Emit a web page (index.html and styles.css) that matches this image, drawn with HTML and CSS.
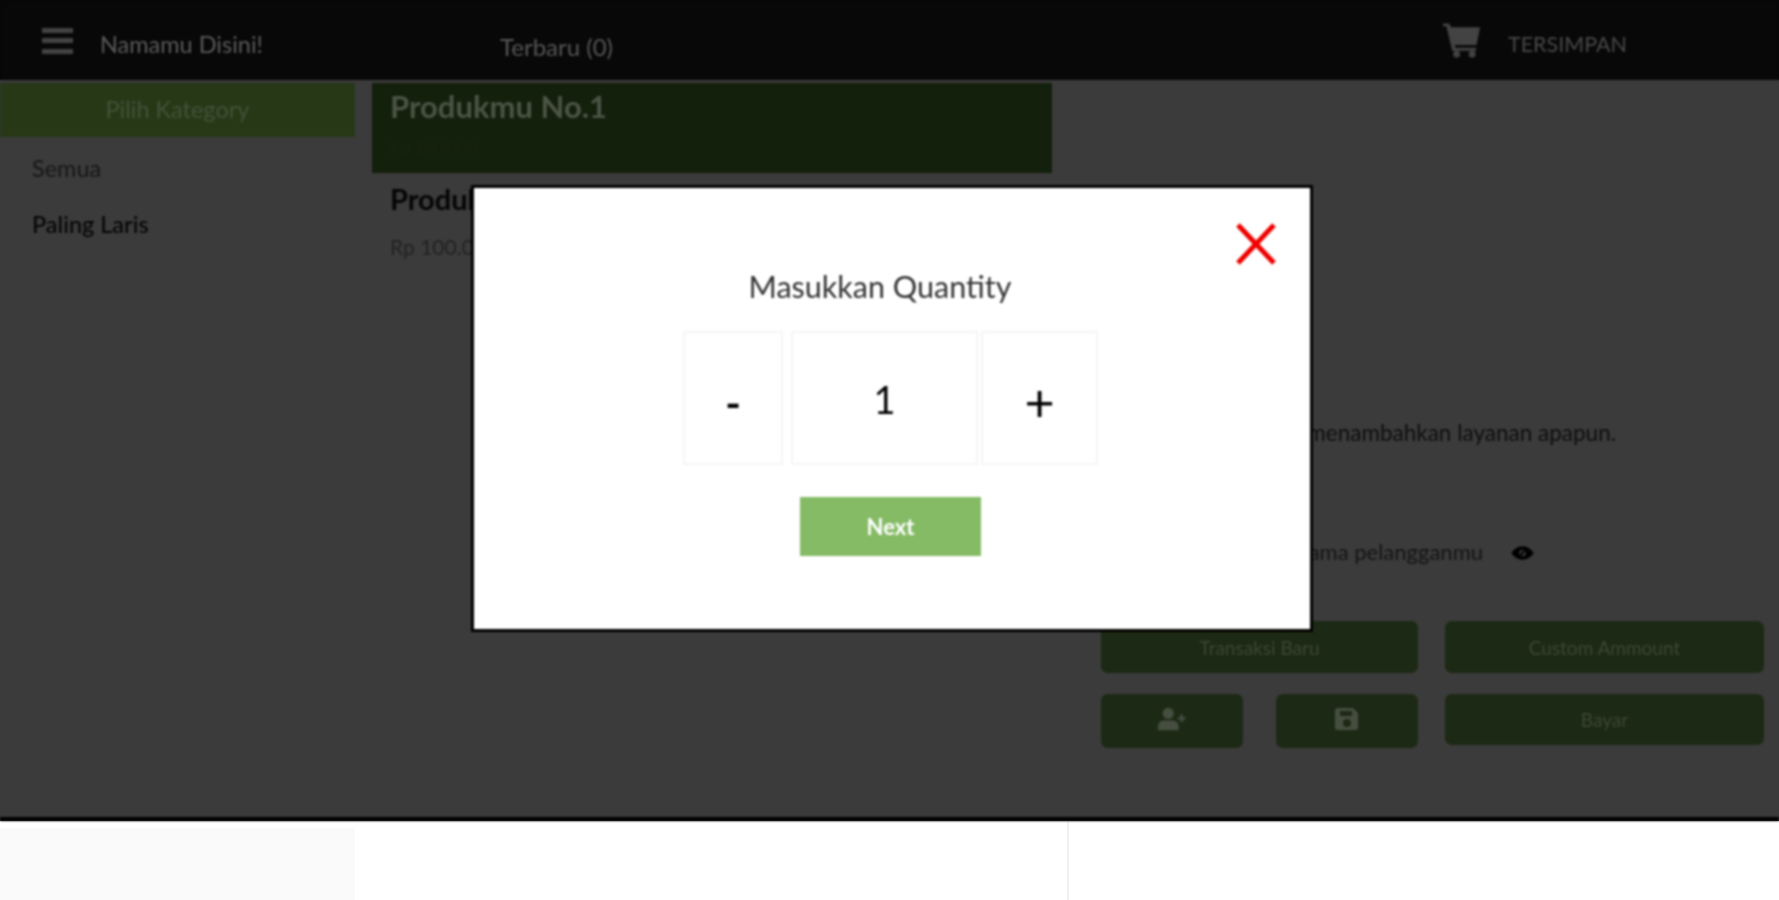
FILE: index.html
```html
<!DOCTYPE html>
<html lang="en">
<head>
    <meta charset="UTF-8">
    <meta name="viewport" content="width=device-width, initial-scale=1.0">
    <title>Kasir</title>
    <link rel="stylesheet" href="styles.css">
</head>
<body>
    <div class="screen">
        <header class="topbar">
            <div class="hamburger"><span></span><span></span><span></span></div>
            <div class="shop-name">Namamu Disini!</div>
            <div class="latest">Terbaru (0)</div>
            <svg class="cart-icon" viewBox="0 0 40 36">
                <path d="M1 1h6.500l1.500 4h30l-3.500 18h-22.500l.8 3h21.200v3h-24.500l-6-25h-3.500z"/>
                <circle cx="15" cy="32.500" r="3.500"/>
                <circle cx="31" cy="32.500" r="3.500"/>
            </svg>
            <div class="saved">TERSIMPAN</div>
        </header>

        <div class="columns">
            <aside class="categories">
                <div class="categories-title">Pilih Kategory</div>
                <div class="category">Semua</div>
                <div class="category category-dark">Paling Laris</div>
            </aside>

            <main class="products">
                <div class="product-card">
                    <h2>Produkmu No.1</h2>
                    <p>Rp 100.000</p>
                </div>
                <div class="product-row">
                    <h3>Produkmu No.2</h3>
                    <p>Rp 100.000</p>
                </div>
            </main>

            <section class="cart">
                <p class="cart-empty">Kamu belum menambahkan layanan apapun.</p>
                <div class="cart-customer">
                    <span>Tampilkan nama pelangganmu</span>
                    <svg class="eye-icon" viewBox="0 0 24 16">
                        <path d="M12 1c5 0 9 3 11.500 7-2.500 4-6.500 7-11.500 7s-9-3-11.500-7c2.500-4 6.500-7 11.500-7z"/>
                        <circle cx="12" cy="8" r="3.500" fill="#3b3b3b"/>
                        <path class="eye-slash" d="M16 3l-8 10"/>
                    </svg>
                </div>
                <div class="cart-actions">
                    <button class="action">Transaksi Baru</button>
                    <button class="action">Custom Ammount</button>
                    <div class="action-icons">
                        <button class="action">
                            <svg class="action-icon" viewBox="0 0 32 24">
                                <circle cx="12" cy="6" r="6"/>
                                <path d="M1 24v-4c0-4 3-6.500 6-6.500h10c3 0 6 2.500 6 6.500v4z"/>
                                <path d="M25 7h2.500v3h3v2.500h-3v3h-2.500v-3h-3v-2.500h3z"/>
                            </svg>
                        </button>
                        <button class="action">
                            <svg class="action-icon" viewBox="0 0 24 24">
                                <path d="M2 1h16l5 5v15a2 2 0 0 1-2 2h-19a2 2 0 0 1-2-2v-18a2 2 0 0 1 2-2zM5 4v5h12v-5zM12 12a4 4 0 1 0 0 8 4 4 0 0 0 0-8z" fill-rule="evenodd"/>
                            </svg>
                        </button>
                    </div>
                    <button class="action action-short">Bayar</button>
                </div>
            </section>
        </div>

        <div class="modal">
            <svg class="modal-close" viewBox="0 0 42 42">
                <path d="M3 2l36 38M39 2l-36 38"/>
            </svg>
            <div class="modal-title">Masukkan Quantity</div>
            <div class="stepper">
                <div class="step step-minus">-</div>
                <div class="step step-value">1</div>
                <div class="step step-plus">+</div>
            </div>
            <button class="next-btn">Next</button>
        </div>
    </div>

    <div class="below">
        <div class="below-left"></div>
        <div class="below-middle"></div>
        <div class="below-right"></div>
    </div>
</body>
</html>
```

FILE: styles.css
```css
:root {
    --dim-bg: #3b3b3b;
    --dim-header: #080808;
    --dim-green: #1c2914;
    --dim-green-strong: #13200c;
    --dim-strip: #273817;
    --bright-green: #85bb65;
}

* {
    margin: 0;
    padding: 0;
    box-sizing: border-box;
}

/* same colours behind the blurred screen, so its edges don't fade to white */
html {
    background: linear-gradient(var(--dim-header) 80px, var(--dim-bg) 80px);
}

body {
    font-family: Lato, "Open Sans", sans-serif;
    overflow: hidden;
}

button {
    font-family: inherit;
    border: none;
}

.screen {
    position: relative;
    height: 821px;
    background: var(--dim-bg);
    border-bottom: 4px solid #000;
    filter: blur(0.8px);
}

.topbar {
    display: flex;
    align-items: center;
    height: 80px;
    padding-left: 42px;
    background: var(--dim-header);
}

.hamburger {
    display: flex;
    flex-direction: column;
    justify-content: space-between;
    width: 31px;
    height: 26px;
    margin-top: 1px;
}

.hamburger span {
    height: 5px;
    background: #434343;
}

.shop-name {
    width: 400px;
    margin: 8px 0 0 27px;
    font-size: 23.500px;
    color: #5a5a5a;
}

.latest {
    width: 942px;
    margin-top: 12px;
    font-size: 24px;
    color: #565656;
}

.cart-icon {
    width: 39px;
    height: 36px;
    margin-top: -1px;
    fill: #434343;
}

.saved {
    margin: 8px 0 0 27px;
    font-size: 21.500px;
    color: #484848;
}

.columns {
    display: flex;
    height: 737px;
    padding-top: 3px;
}

.categories {
    width: 355px;
}

.categories-title {
    height: 54px;
    line-height: 52px;
    text-align: center;
    font-size: 23.500px;
    color: #435238;
    background: var(--dim-strip);
}

.category {
    height: 58px;
    padding: 17px 32px 0;
    font-size: 23.500px;
    color: #161616;
}

.category-dark {
    padding-top: 15px;
    color: #050505;
    font-weight: 500;
}

.products {
    width: 680px;
    margin-left: 17px;
}

.product-card {
    height: 90px;
    padding: 4px 18px;
    background: var(--dim-green-strong);
}

.product-card h2 {
    font-size: 31px;
    font-weight: 700;
    color: #4c5546;
}

.product-card p {
    margin-top: 12px;
    font-size: 17px;
    color: #18240f;
}

.product-row {
    padding: 8px 18px;
}

.product-row h3 {
    font-size: 29px;
    font-weight: 700;
    color: #050505;
}

.product-row p {
    margin-top: 18px;
    font-size: 21px;
    color: #222;
}

.cart {
    flex: 1;
    padding: 335px 15px 0 49px;
}

.cart-empty {
    height: 30px;
    line-height: 30px;
    padding-right: 148px;
    text-align: right;
    white-space: nowrap;
    font-size: 22.500px;
    color: #0e0e0e;
}

.cart-customer {
    display: flex;
    justify-content: flex-end;
    align-items: center;
    height: 30px;
    margin-top: 90px;
    padding-right: 230px;
    white-space: nowrap;
    font-size: 22px;
    color: #141414;
}

.cart-customer span {
    margin-bottom: 4px;
}

.eye-icon {
    width: 23px;
    height: 16px;
    margin-left: 28px;
    fill: #000;
}

.eye-slash {
    fill: none;
    stroke: #000;
    stroke-width: 2;
}

.cart-actions {
    display: grid;
    grid-template-columns: 317px 319px;
    grid-template-rows: 52px 54px;
    gap: 21px 27px;
    margin-top: 53px;
}

.action {
    height: 100%;
    border-radius: 7px;
    background: var(--dim-green);
    font-size: 19px;
    color: #3d4735;
}

.action-short {
    height: 51px;
}

.action-icons {
    display: flex;
    justify-content: space-between;
}

.action-icons .action {
    width: 142px;
}

.action-icon {
    width: 30px;
    height: 24px;
    fill: #454e40;
}

.modal {
    position: absolute;
    left: 471px;
    top: 185px;
    width: 842px;
    height: 447px;
    padding-top: 79px;
    background: #fff;
    border: 3px solid #000;
}

.modal-close {
    position: absolute;
    right: 33px;
    top: 35px;
    width: 42px;
    height: 42px;
    fill: none;
    stroke: #f00000;
    stroke-width: 5;
}

.modal-title {
    padding-right: 24px;
    text-align: center;
    font-size: 30.500px;
    line-height: 38px;
    color: #333;
}

.stepper {
    display: flex;
    height: 134px;
    margin: 26px 0 0 209px;
}

.step {
    display: flex;
    align-items: center;
    justify-content: center;
    padding-top: 7px;
    border: 2px solid #f5f5f5;
    font-size: 42px;
    color: #000;
}

.step-minus {
    width: 100px;
    padding-top: 10px;
    font-weight: 700;
}

.step-value {
    width: 187px;
    margin-left: 8px;
    padding-top: 1px;
    font-size: 38px;
}

.step-plus {
    width: 117px;
    margin-left: 3px;
    font-size: 52px;
}

.next-btn {
    display: block;
    width: 181px;
    height: 59px;
    margin: 32px 0 0 326px;
    background: var(--bright-green);
    color: #fff;
    font-size: 22px;
    font-weight: 700;
}

.below {
    display: flex;
    height: 79px;
    background: #fff;
}

.below-left {
    width: 355px;
    margin-top: 7px;
    background: #fafafa;
}

.below-middle {
    width: 712px;
}

.below-right {
    flex: 1;
    border-left: 2px solid #f2f2f2;
}
```
